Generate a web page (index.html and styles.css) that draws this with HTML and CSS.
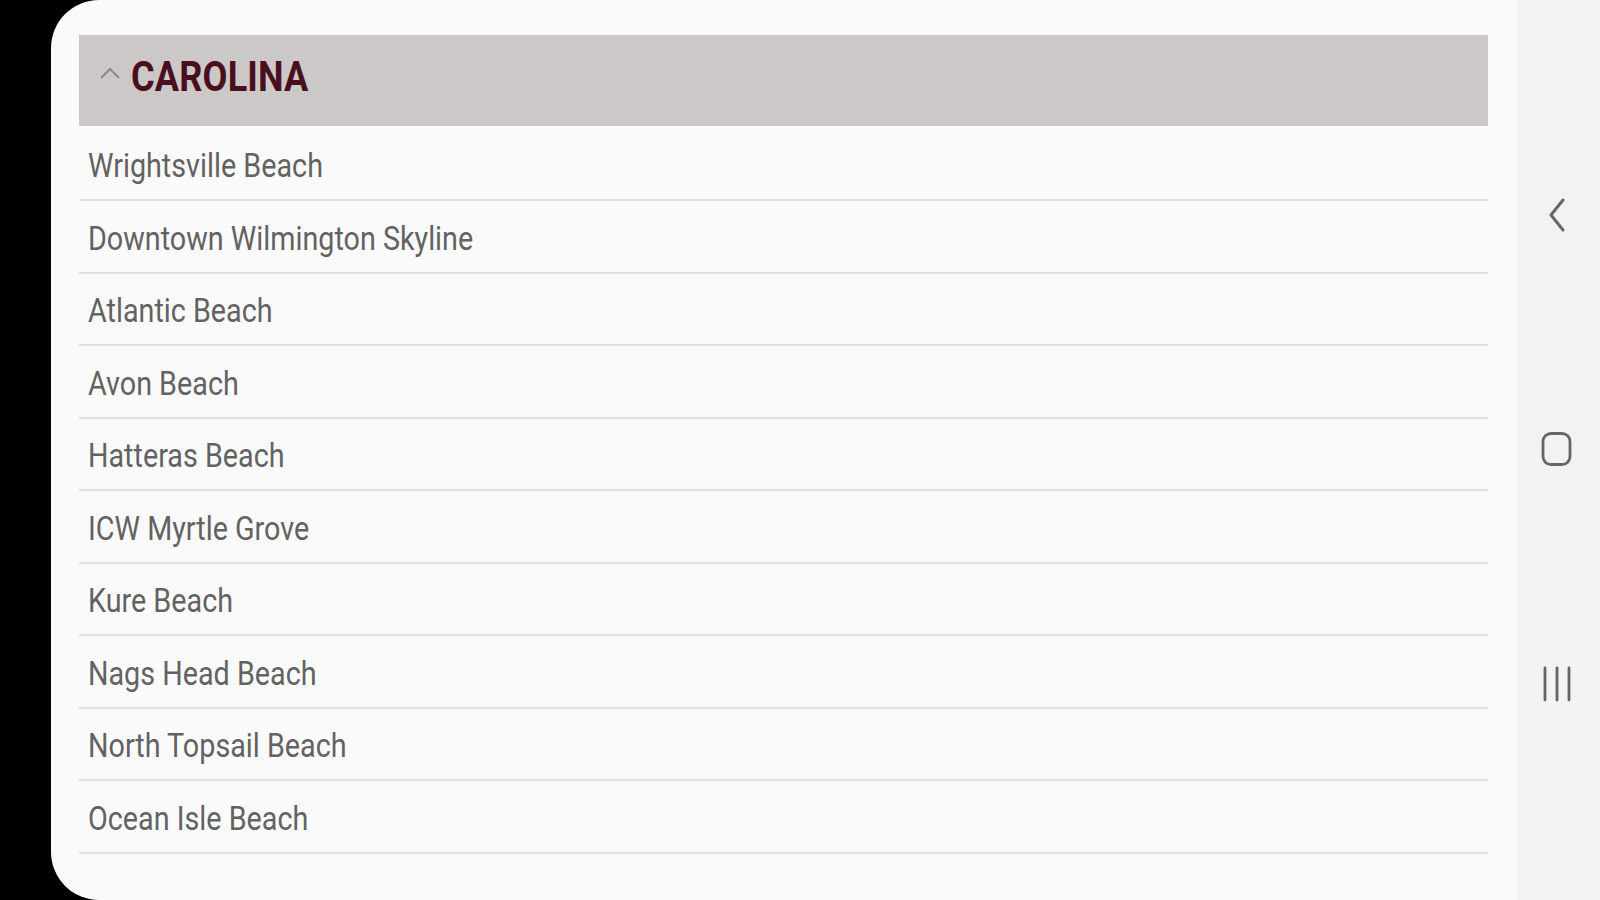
FILE: index.html
```html
<!DOCTYPE html>
<html>
<head>
<meta charset="utf-8">
<link rel="stylesheet" href="styles.css">
</head>
<body>
<div class="screen">
  <div class="bezel"></div>
  <main class="card">
    <div class="group-header">
      <svg class="chev" width="22" height="14" viewBox="0 0 22 14"><path d="M2 12 L11 3 L20 12" fill="none" stroke="#8a8a8a" stroke-width="2"/></svg>
      <span class="group-title">CAROLINA</span>
    </div>
    <ul class="list">
      <li class="row"><span class="label">Wrightsville Beach</span></li>
      <li class="row"><span class="label">Downtown Wilmington Skyline</span></li>
      <li class="row"><span class="label">Atlantic Beach</span></li>
      <li class="row"><span class="label">Avon Beach</span></li>
      <li class="row"><span class="label">Hatteras Beach</span></li>
      <li class="row"><span class="label">ICW Myrtle Grove</span></li>
      <li class="row"><span class="label">Kure Beach</span></li>
      <li class="row"><span class="label">Nags Head Beach</span></li>
      <li class="row"><span class="label">North Topsail Beach</span></li>
      <li class="row"><span class="label">Ocean Isle Beach</span></li>
    </ul>
  </main>
  <nav class="navbar">
    <svg class="nav-back" width="20" height="36" viewBox="0 0 20 36"><path d="M16 3 L4 18 L16 33" fill="none" stroke="#666" stroke-width="3" stroke-linecap="round" stroke-linejoin="round"/></svg>
    <svg class="nav-home" width="34" height="36" viewBox="0 0 34 36"><rect x="3" y="2.5" width="27" height="31" rx="8" fill="none" stroke="#666" stroke-width="2.8"/></svg>
    <svg class="nav-recent" width="34" height="36" viewBox="0 0 34 36"><path d="M5 2 V34 M17 2 V34 M29 2 V34" fill="none" stroke="#666" stroke-width="2.8" stroke-linecap="round"/></svg>
  </nav>
</div>
</body>
</html>
```
FILE: styles.css
```css
html, body {
  margin: 0;
  padding: 0;
  width: 1600px;
  height: 900px;
  overflow: hidden;
  background: #000;
}
.screen {
  display: flex;
  width: 1600px;
  height: 900px;
}
.bezel {
  width: 51px;
  flex: none;
  background: #000;
}
.card {
  flex: 1;
  background: #fafafa;
  border-radius: 48px 0 0 48px;
  padding: 35px 30px 0 28px;
  font-family: Roboto, "Noto Sans", sans-serif;
}
.group-header {
  height: 91px;
  background: #cbc8c7;
  display: flex;
  align-items: center;
  padding-left: 20px;
  box-sizing: border-box;
  padding-bottom: 8px;
}
.chev {
  flex: none;
  margin-right: 10px;
  margin-top: -8px;
}
.group-title {
  display: inline-block;
  font-size: 42px;
  font-weight: 700;
  color: #4a0f1e;
  transform: scaleX(0.86);
  transform-origin: left center;
  letter-spacing: 0.2px;
}
.list {
  list-style: none;
  margin: 0;
  padding: 0;
}
.row {
  height: 67.5px;
  border-bottom: 2px solid #e1e1e1;
  display: flex;
  align-items: center;
  padding-left: 9px;
  padding-top: 3px;
  box-sizing: content-box;
}
.row:first-child {
  height: 69px;
  padding-top: 4px;
}
.label {
  display: inline-block;
  font-size: 34px;
  line-height: 40px;
  color: #626262;
  transform: scaleX(0.845);
  transform-origin: left center;
  white-space: nowrap;
}
.navbar {
  width: 82px;
  flex: none;
  background: #f2f2f2;
  display: flex;
  flex-direction: column;
  align-items: center;
  padding-top: 197px;
  padding-right: 5px;
  box-sizing: border-box;
}
.nav-home {
  margin-top: 198px;
}
.nav-recent {
  margin-top: 199px;
}
```
